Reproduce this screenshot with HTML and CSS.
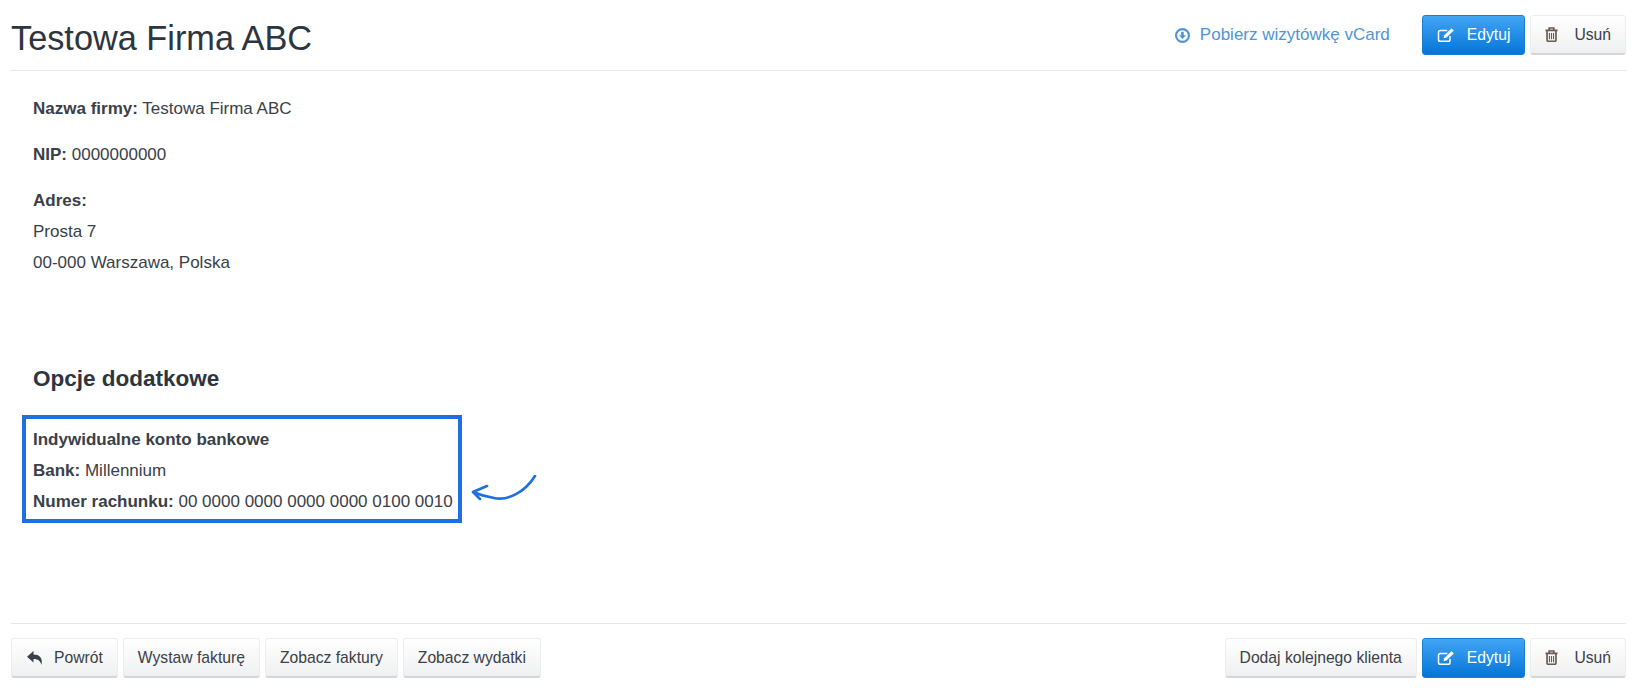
FILE: index.html
```html
<!DOCTYPE html>
<html lang="pl">
<head>
    <meta charset="UTF-8">
    <title>Testowa Firma ABC</title>
    <link rel="stylesheet" href="styles.css">
</head>
<body>
    <div class="page">
        <div class="page-header">
            <h1>Testowa Firma ABC</h1>
            <div class="actions">
                <a class="vcard" href="#">
                    <svg class="icon" viewBox="0 0 14 14" width="15" height="15"><path fill="currentColor" fill-rule="evenodd" d="M7 0a7 7 0 1 1 0 14A7 7 0 0 1 7 0zm0 2a5 5 0 1 0 0 10A5 5 0 0 0 7 2zM5.800 3.500h2.400v3.200h2L7 10.200 3.800 6.700h2z"/></svg>
                    Pobierz wizytówkę vCard
                </a>
                <a class="btn btn-primary" href="#">
                    <svg class="icon" viewBox="0 0 18 16" width="18" height="16"><path fill="none" stroke="currentColor" stroke-width="1.500" d="M13 9v3.500A1.800 1.800 0 0 1 11.200 14.300H3.300a1.800 1.800 0 0 1-1.800-1.800V5.300a1.800 1.800 0 0 1 1.800-1.800h7"/><path fill="currentColor" d="M14.500 1.200l2.300 2.200-7.300 7.100-3 .7.7-3z"/></svg>
                    Edytuj
                </a>
                <a class="btn btn-remove" href="#">
                    <svg class="icon trash" viewBox="0 0 14 16" width="13" height="15"><path fill="none" stroke="currentColor" stroke-width="1.800" d="M4.500 3V1h5v2M.5 3.500h13M2.200 4v10a1.300 1.300 0 0 0 1.300 1.300h7a1.300 1.300 0 0 0 1.300-1.300V4"/><path fill="none" stroke="currentColor" stroke-width="1.200" d="M4.800 6.500V13M7 6.500V13M9.200 6.500V13"/></svg>
                    Usuń
                </a>
            </div>
        </div>

        <div class="details">
            <p><b>Nazwa firmy:</b> Testowa Firma ABC</p>
            <p><b>NIP:</b> 0000000000</p>
            <div class="lines">
                <div><b>Adres:</b></div>
                <div>Prosta 7</div>
                <div>00-000 Warszawa, Polska</div>
            </div>

            <h2>Opcje dodatkowe</h2>

            <div class="highlight">
                <div class="lines">
                    <div><b>Indywidualne konto bankowe</b></div>
                    <div><b>Bank:</b> Millennium</div>
                    <div><b>Numer rachunku:</b> 00 0000 0000 0000 0000 0100 0010</div>
                </div>
                <svg class="arrow" viewBox="0 0 67 28" width="67" height="28"><path fill="none" stroke="#1f6fe0" stroke-width="2.600" stroke-linecap="round" stroke-linejoin="round" d="M65 1C55 17 38 26 24 23C16 21.500 9 19.500 3 17M17 11L3 17 10 24"/></svg>
            </div>
        </div>

        <div class="page-footer">
            <div class="group">
                <a class="btn btn-back" href="#">
                    <svg class="icon" viewBox="0 0 16 14" width="16" height="14"><path fill="currentColor" d="M6.500 0v3.500C12 3.500 16 6.500 14.500 14 13.500 10 11 8 6.500 8v3.500L0 5.700z"/></svg>
                    Powrót
                </a>
                <a class="btn" href="#">Wystaw fakturę</a>
                <a class="btn" href="#">Zobacz faktury</a>
                <a class="btn" href="#">Zobacz wydatki</a>
            </div>
            <div class="group">
                <a class="btn" href="#">Dodaj kolejnego klienta</a>
                <a class="btn btn-primary" href="#">
                    <svg class="icon" viewBox="0 0 18 16" width="18" height="16"><path fill="none" stroke="currentColor" stroke-width="1.500" d="M13 9v3.500A1.800 1.800 0 0 1 11.200 14.300H3.300a1.800 1.800 0 0 1-1.800-1.800V5.300a1.800 1.800 0 0 1 1.800-1.800h7"/><path fill="currentColor" d="M14.500 1.200l2.300 2.200-7.300 7.100-3 .7.7-3z"/></svg>
                    Edytuj
                </a>
                <a class="btn btn-remove" href="#">
                    <svg class="icon trash" viewBox="0 0 14 16" width="13" height="15"><path fill="none" stroke="currentColor" stroke-width="1.800" d="M4.500 3V1h5v2M.5 3.500h13M2.200 4v10a1.300 1.300 0 0 0 1.300 1.300h7a1.300 1.300 0 0 0 1.300-1.300V4"/><path fill="none" stroke="currentColor" stroke-width="1.200" d="M4.800 6.500V13M7 6.500V13M9.200 6.500V13"/></svg>
                    Usuń
                </a>
            </div>
        </div>
    </div>
</body>
</html>
```

FILE: styles.css
```css
html, body {
    height: 100%;
}
body {
    font-family: "Liberation Sans", Arial, sans-serif;
    font-size: 17px;
    color: #3a4048;
    background: #fff;
    margin: 0;
}
.page {
    display: flex;
    flex-direction: column;
    height: 695px;
    box-sizing: border-box;
    padding: 0 12px 17px 11px;
}
.page-header {
    display: flex;
    justify-content: space-between;
    align-items: center;
    height: 71px;
    border-bottom: 1px solid #e3e6ea;
    box-sizing: border-box;
}
h1 {
    font-size: 34.3px;
    font-weight: normal;
    color: #2c3540;
    margin: 7px 0 0;
}
.actions {
    display: flex;
    align-items: center;
}
.vcard {
    display: flex;
    align-items: center;
    gap: 10px;
    color: #4f94d8;
    text-decoration: none;
    margin-right: 32px;
}
.details {
    flex: 1;
    padding: 22px 0 0 22px;
}
.details p {
    margin: 0 0 15px;
    line-height: 31px;
}
.lines {
    line-height: 31px;
}
.lines + h2 {
    margin-top: 88px;
}
h2 {
    font-size: 22.5px;
    font-weight: bold;
    color: #2c3540;
    margin: 0 0 23px;
}
.highlight {
    position: relative;
    display: inline-block;
    border: 4px solid #1f6fe0;
    padding: 5px 5px 2px 7px;
    margin-left: -11px;
}
.arrow {
    position: absolute;
    left: 100%;
    top: 56px;
    margin-left: 12px;
}
.page-footer {
    display: flex;
    justify-content: space-between;
    border-top: 1px solid #e3e6ea;
    padding-top: 14px;
}
.group {
    display: flex;
    gap: 5px;
}
.actions .btn + .btn {
    margin-left: 5px;
}
.btn {
    display: inline-flex;
    align-items: center;
    gap: 12px;
    height: 40px;
    box-sizing: border-box;
    padding: 0 14px;
    font-size: 15.7px;
    color: #3a4048;
    text-decoration: none;
    background: linear-gradient(#ffffff, #eff0f1);
    border: 1px solid #eceded;
    border-bottom: 2px solid #d4d6d8;
    border-radius: 3px;
}
.btn-primary {
    color: #fff;
    background: linear-gradient(#42a5f5, #0575d8);
    border: 1px solid #1a7fd4;
}
.btn-remove {
    gap: 16px;
}
.btn-back {
    gap: 11px;
    padding-left: 15px;
}
.icon {
    flex: none;
}
.trash {
    color: #6a5a50;
}
```
